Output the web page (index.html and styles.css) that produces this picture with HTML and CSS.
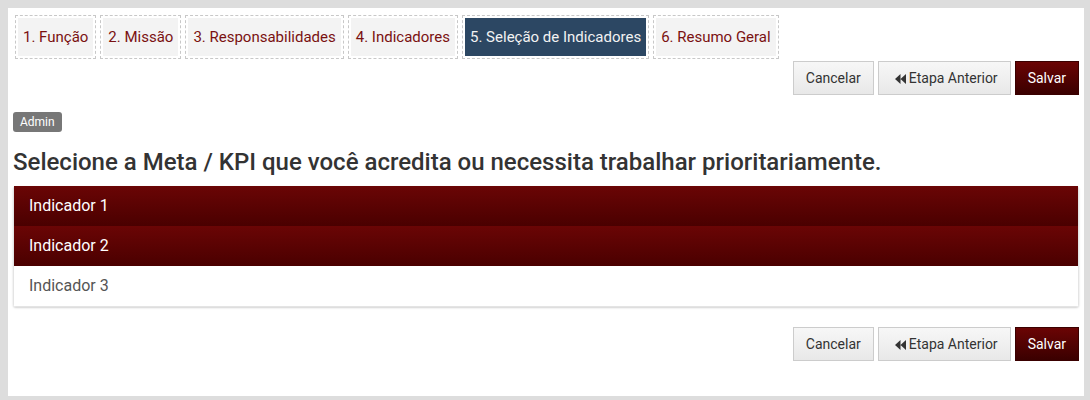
FILE: index.html
```html
<!DOCTYPE html>
<html lang="pt">
<head>
<meta charset="utf-8">
<title>Seleção de Indicadores</title>
<link rel="stylesheet" href="styles.css">
</head>
<body>
<div class="page">
  <ul class="steps">
    <li class="step"><a>1. Função</a></li>
    <li class="step"><a>2. Missão</a></li>
    <li class="step"><a>3. Responsabilidades</a></li>
    <li class="step"><a>4. Indicadores</a></li>
    <li class="step active"><a>5. Seleção de Indicadores</a></li>
    <li class="step"><a>6. Resumo Geral</a></li>
  </ul>
  <div class="actions top">
    <button class="btn">Cancelar</button>
    <button class="btn"><svg class="ico" viewBox="0 0 11 10" width="11" height="10"><path d="M5.5 0 L0 5 L5.5 10 Z M11 0 L5.5 5 L11 10 Z" fill="#333"/></svg>Etapa Anterior</button>
    <button class="btn primary">Salvar</button>
  </div>
  <div class="meta"><span class="badge">Admin</span></div>
  <h3 class="title">Selecione a Meta / KPI que você acredita ou necessita trabalhar prioritariamente.</h3>
  <div class="list">
    <div class="item selected">Indicador 1</div>
    <div class="item selected">Indicador 2</div>
    <div class="item">Indicador 3</div>
  </div>
  <div class="actions bottom">
    <button class="btn">Cancelar</button>
    <button class="btn"><svg class="ico" viewBox="0 0 11 10" width="11" height="10"><path d="M5.5 0 L0 5 L5.5 10 Z M11 0 L5.5 5 L11 10 Z" fill="#333"/></svg>Etapa Anterior</button>
    <button class="btn primary">Salvar</button>
  </div>
</div>
</body>
</html>
```
FILE: styles.css
```css
html, body {
  margin: 0;
  padding: 0;
}
body {
  background: #dddddd;
  font-family: Roboto, "Liberation Sans", Arial, sans-serif;
  font-size: 14px;
  color: #333;
  padding: 8px 6px 4px 8px;
  height: 400px;
  box-sizing: border-box;
}
.page {
  background: #fff;
  height: 388px;
  padding: 7px 5px 0 5px;
  box-sizing: border-box;
}
.steps {
  list-style: none;
  margin: 0 0 0 2px;
  padding: 0;
  display: flex;
  gap: 4px;
}
.step {
  border: 1px dashed #c8c8c8;
  padding: 2px;
}
.step a {
  display: block;
  background: #f3f3f3;
  color: #7a1111;
  padding: 9px 5px;
  line-height: 20px;
  font-size: 15px;
}
.step.active a {
  background: #2c4763;
  color: #f2f2f2;
}
.actions {
  display: flex;
  justify-content: flex-end;
  gap: 4px;
}
.actions.top {
  margin-top: 2px;
}
.actions.bottom {
  margin-top: 20px;
}
.btn {
  font-family: inherit;
  font-size: 14px;
  line-height: 20px;
  height: 34px;
  padding: 6px 12px;
  border: 1px solid #cccccc;
  border-radius: 0;
  color: #333;
  background: linear-gradient(#f7f7f7, #e8e8e8);
  display: flex;
  align-items: center;
  box-sizing: border-box;
  margin: 0;
}
.btn .ico {
  margin: 1px 3px 0 4px;
}
.btn.primary {
  background: linear-gradient(#6a0404, #3a0000);
  border-color: #3a0000;
  color: #fff;
}
.meta {
  display: flex;
  margin-top: 17px;
}
.badge {
  display: block;
  background: #777;
  color: #fff;
  font-size: 12px;
  line-height: 14px;
  padding: 3px 7px;
  border-radius: 3px;
}
.title {
  margin: 17px 0 11px 0;
  font-size: 24px;
  font-weight: 500;
  line-height: 26px;
  color: #333;
}
.list {
  border-radius: 3px;
  box-shadow: 0 1px 2px rgba(0,0,0,0.18);
  border: 1px solid #e4e4e4;
  border-top: 0;
}
.item {
  padding: 10px 15px;
  line-height: 20px;
  font-size: 16px;
  color: #555;
  background: #fff;
}
.item.selected {
  background: linear-gradient(#6a0505, #4a0000);
  color: #fff;
}
```
